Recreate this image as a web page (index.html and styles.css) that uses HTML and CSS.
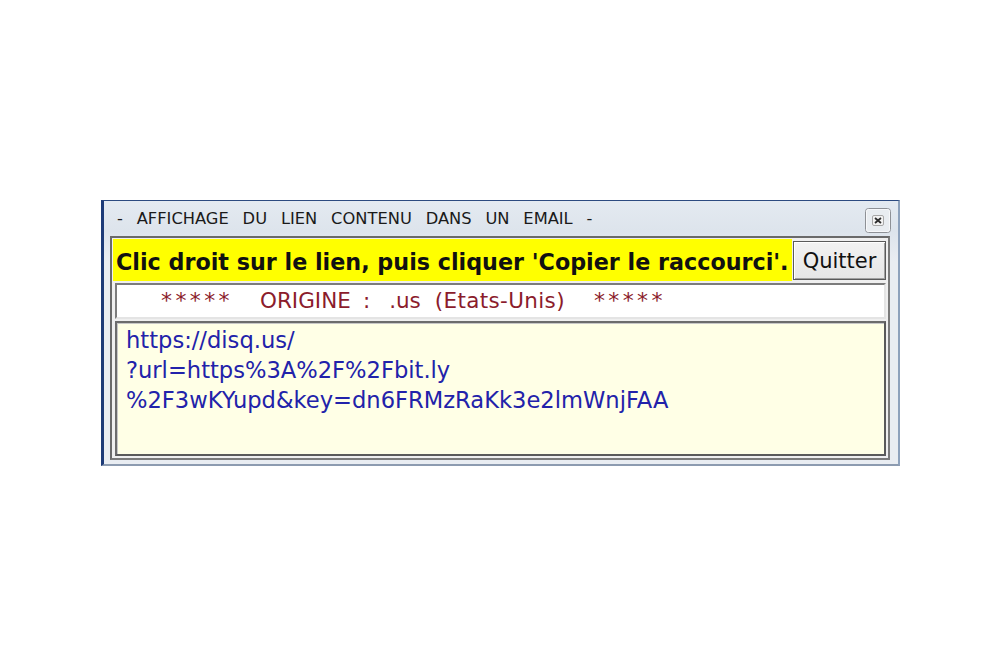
FILE: index.html
```html
<!DOCTYPE html>
<html lang="fr">
<head>
<meta charset="utf-8">
<title>Affichage du lien</title>
<link rel="stylesheet" href="styles.css">
</head>
<body>
<div class="stage">
  <div class="window">
    <div class="titlebar">
      <span class="title">-&nbsp;&nbsp;AFFICHAGE&nbsp;&nbsp;DU&nbsp;&nbsp;LIEN&nbsp;&nbsp;CONTENU&nbsp;&nbsp;DANS&nbsp;&nbsp;UN&nbsp;&nbsp;EMAIL&nbsp;&nbsp;-</span>
      <span class="close">
        <svg width="26" height="25" viewBox="0 0 26 25">
          <rect x="0.5" y="0.5" width="25" height="24" rx="3" fill="#e9edf1" stroke="#8e9196"/>
          <rect x="1.5" y="1.5" width="23" height="22" rx="2" fill="none" stroke="#f7f8fa"/>
          <rect x="7.5" y="7.5" width="11" height="10" rx="1.5" fill="#f3f3f3" stroke="#a8a8a8"/>
          <path d="M10 10 L16 15 M16 10 L10 15" stroke="#2e2e2e" stroke-width="1.8"/>
        </svg>
      </span>
    </div>
    <div class="client">
      <div class="toprow">
        <div class="hint">Clic droit sur le lien, puis cliquer 'Copier le raccourci'.</div>
        <button class="quit">Quitter</button>
      </div>
      <div class="origin">
        <span class="stars">*****</span>
        <span class="o-word">ORIGINE</span>
        <span class="o-colon">:</span>
        <span class="o-tld">.us</span>
        <span class="o-country">(Etats-Unis)</span>
        <span class="stars stars-end">*****</span>
      </div>
      <div class="link">https://disq.us/<br>?url=https%3A%2F%2Fbit.ly<br>%2F3wKYupd&amp;key=dn6FRMzRaKk3e2lmWnjFAA</div>
    </div>
  </div>
</div>
</body>
</html>
```
FILE: styles.css
```css
html, body {
  margin: 0;
  padding: 0;
  background: #ffffff;
}
.stage {
  padding: 200px 0 0 101px;
}
.window {
  box-sizing: border-box;
  width: 799px;
  height: 266px;
  border-left: 3px solid #1d3b78;
  border-top: 1px solid #2c4a80;
  border-right: 2px solid #8ea2bc;
  border-bottom: 2px solid #8c9bb0;
  background: linear-gradient(#e4eaf1, #dde4ec 30px, #e9edf2 60px, #e9edf2);
  padding: 0 8px 4px 6px;
  display: flex;
  flex-direction: column;
  font-family: "DejaVu Sans", sans-serif;
}
.titlebar {
  height: 35px;
  display: flex;
  align-items: center;
  justify-content: space-between;
  padding-left: 7px;
}
.title {
  font-size: 16.3px;
  color: #1a1a1a;
  word-spacing: 1.75px;
  white-space: nowrap;
}
.close {
  display: flex;
  margin-top: 3px;
  margin-right: -1px;
}
.client {
  flex: 1;
  border: 2px solid #6a6a6a;
  border-right-color: #7a7a7a;
  border-bottom-color: #7a7a7a;
  background: #efefef;
  padding: 1px 2px 2px 1px;
  display: flex;
  flex-direction: column;
  gap: 2px;
}
.toprow {
  display: flex;
  height: 42px;
  gap: 1px;
}
.hint {
  flex: 1;
  background: #ffff00;
  font-weight: bold;
  font-size: 22.25px;
  color: #111111;
  display: flex;
  align-items: center;
  padding: 3px 0 0 3px;
  white-space: nowrap;
  overflow: hidden;
}
.quit {
  width: 93px;
  margin: 2px 0 1px 0;
  background: linear-gradient(#f2f2f2, #e6e6e6);
  border: 1px solid #5a5a5a;
  box-shadow: inset 1px 1px 0 #ffffff, inset -1px -1px 0 #a0a0a0;
  font-family: "DejaVu Sans", sans-serif;
  font-size: 21px;
  color: #111111;
  padding: 0;
}
.origin {
  height: 36px;
  box-sizing: border-box;
  margin-left: 2px;
  background: #ffffff;
  border: 2px solid #7c7c7c;
  border-right-color: #e4e4e4;
  border-bottom-color: #e4e4e4;
  color: #8b1c2c;
  font-size: 21.5px;
  padding: 0 0 2px 44px;
  display: flex;
  align-items: center;
  white-space: nowrap;
}
.stars {
  letter-spacing: 3.4px;
  font-size: 22px;
}
.o-word {
  margin-left: 27px;
}
.o-colon {
  margin-left: 12px;
}
.o-tld {
  margin-left: 19px;
}
.o-country {
  margin-left: 14px;
  letter-spacing: 0.35px;
}
.stars-end {
  margin-left: 29px;
}
.link {
  flex: 1;
  margin-left: 2px;
  background: #ffffe6;
  border: 2px solid #6c6c6c;
  border-right-color: #5a5a5a;
  border-bottom-color: #5a5a5a;
  box-shadow: inset 1px 1px 0 #c8c8c8;
  color: #2222aa;
  font-size: 22.6px;
  line-height: 30px;
  padding: 2px 0 0 9px;
}
```
